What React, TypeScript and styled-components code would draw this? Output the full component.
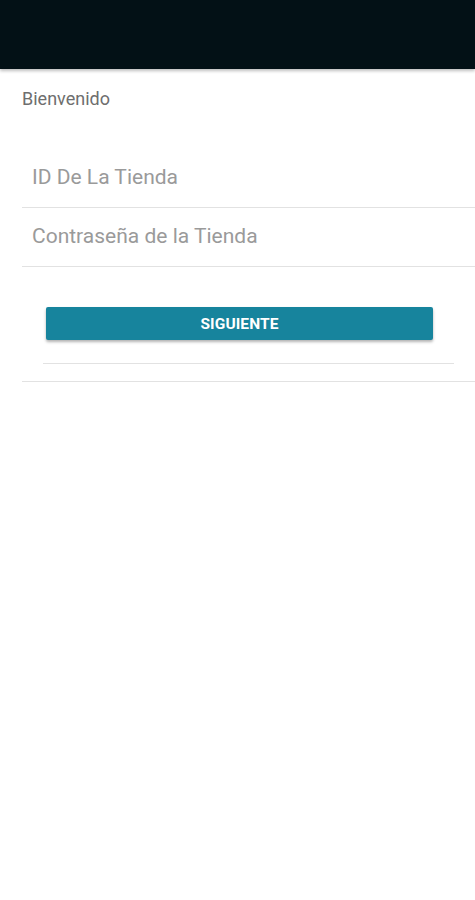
import React from 'react';
import styled, { createGlobalStyle } from 'styled-components';

const GlobalStyle = createGlobalStyle`
  html, body {
    margin: 0;
    padding: 0;
    background: #ffffff;
    font-family: Roboto, "Noto Sans", sans-serif;
  }
`;

// --- Layout ---
const Screen = styled.div`
  width: 475px;
  min-height: 900px;
  background: #ffffff;
  display: flex;
  flex-direction: column;
`;

const TopBar = styled.header`
  height: 69px;
  background: #031116;
  box-shadow: 0 2px 3px rgba(0, 0, 0, 0.25);
`;

const Content = styled.main`
  padding-left: 22px;
  display: flex;
  flex-direction: column;
`;

const Welcome = styled.div`
  margin-top: 18px;
  font-size: 18px;
  line-height: 24px;
  color: #6e6e6e;
`;

const Field = styled.div<{ $gap: number }>`
  margin-top: ${(p) => p.$gap}px;
  padding: 0 0 2px 10px;
  height: 56px;
  border-bottom: 1px solid #e2e2e2;
  display: flex;
  align-items: center;
`;

const Input = styled.input`
  border: none;
  outline: none;
  background: transparent;
  padding: 0;
  width: 100%;
  font-family: Roboto, "Noto Sans", sans-serif;
  font-size: 21px;
  color: #333;

  &::placeholder {
    color: #9a9a9a;
  }
`;

const ButtonBlock = styled.div`
  padding: 40px 21px 17px 21px;
  border-bottom: 1px solid #e2e2e2;
`;

const ButtonArea = styled.div`
  padding: 0 0 23px 3px;
  width: 411px;
  border-bottom: 1px solid #e2e2e2;
  box-sizing: border-box;
`;

const Button = styled.button`
  display: block;
  width: 387px;
  height: 33px;
  border: none;
  border-radius: 2px;
  background: #17849d;
  color: #ffffff;
  font-family: Roboto, "Noto Sans", sans-serif;
  font-weight: 700;
  font-size: 15.5px;
  letter-spacing: 0.1px;
  box-shadow: 0 2px 3px rgba(0, 0, 0, 0.3);
  cursor: pointer;
`;

const App = () => {
  return (
    <>
      <GlobalStyle />
      <Screen>
        <TopBar />
        <Content>
          <Welcome>Bienvenido</Welcome>
          <Field $gap={38}>
            <Input type="text" placeholder="ID De La Tienda" />
          </Field>
          <Field $gap={0}>
            <Input type="password" placeholder="Contraseña de la Tienda" />
          </Field>
          <ButtonBlock>
            <ButtonArea>
              <Button type="button">SIGUIENTE</Button>
            </ButtonArea>
          </ButtonBlock>
        </Content>
      </Screen>
    </>
  );
};

export default App;
